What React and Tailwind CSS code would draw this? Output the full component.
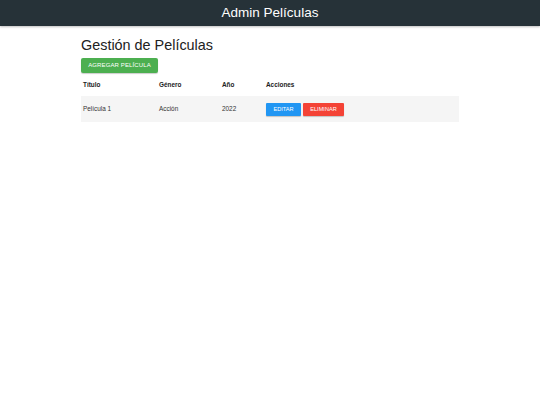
import React from 'react'

const movies = [{ id: 1, titulo: 'Película 1', genero: 'Acción', anio: 2022 }]

export default function App() {
  return (
    <div className="min-h-screen bg-white text-[#212121]" style={{ fontFamily: '"Liberation Sans", Arial, sans-serif' }}>
      <header className="h-[26px] bg-[#263238] text-white flex items-center justify-center shadow-[0_1px_2px_rgba(0,0,0,0.25)]">
        <h1 className="text-[13.5px] leading-none">Admin Películas</h1>
      </header>

      <main className="w-[378px] mx-auto pt-[10px]">
        <h2 className="text-[14.4px] leading-[18px] mb-[4px]">Gestión de Películas</h2>
        <button className="h-[15px] w-[77px] bg-[#4caf50] text-white text-[6px] tracking-[0.02em] rounded-[2px] shadow-[0_1px_1px_rgba(0,0,0,0.2)] flex items-center justify-center">
          AGREGAR PELÍCULA
        </button>

        <table className="w-full border-collapse text-[6.4px]">
          <thead>
            <tr className="h-[23px] text-left">
              <th className="w-[78px] pl-[2px] font-bold">Título</th>
              <th className="w-[63px] font-bold">Género</th>
              <th className="w-[44px] font-bold">Año</th>
              <th className="font-bold">Acciones</th>
            </tr>
          </thead>
          <tbody>
            {movies.map(m => (
              <tr key={m.id} className="h-[26px] bg-[#f5f5f5] text-[#333]">
                <td className="pl-[2px]">{m.titulo}</td>
                <td>{m.genero}</td>
                <td>{m.anio}</td>
                <td>
                  <div className="flex gap-[2px]">
                    <button className="h-[13px] w-[35px] bg-[#2196f3] text-white text-[5.6px] rounded-[1px] shadow-[0_1px_1px_rgba(0,0,0,0.2)]">EDITAR</button>
                    <button className="h-[13px] w-[41px] bg-[#f44336] text-white text-[5.6px] rounded-[1px] shadow-[0_1px_1px_rgba(0,0,0,0.2)]">ELIMINAR</button>
                  </div>
                </td>
              </tr>
            ))}
          </tbody>
        </table>
      </main>
    </div>
  )
}
